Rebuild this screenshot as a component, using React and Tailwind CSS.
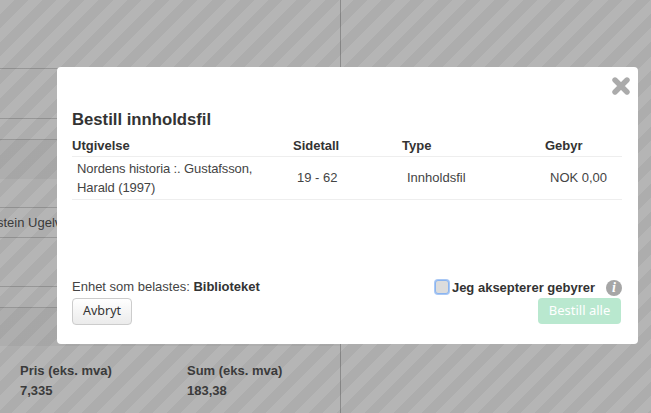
import React from 'react';

const Row = ({ className, children }) => (
  <div className={`border-b border-[#d4d4d4] overflow-hidden whitespace-nowrap ${className}`}>{children}</div>
);

const App = () => {
  return (
    <div className="relative h-[413px] w-[651px] overflow-hidden bg-white font-['Liberation_Sans',Arial,sans-serif] text-[#333]">
      {/* page behind the dialog */}
      <div className="h-full w-[341px] border-r border-[#c4c4c4]">
        <Row className="h-[69px]" />
        <Row className="h-[50px]" />
        <Row className="h-[21px]" />
        <div className="h-[39px] bg-[#f5f5f5]" />
        <Row className="h-[29px]" />
        <Row className="h-[30px] text-[13px] leading-[29px] text-[#555]">
          <span className="-ml-[3px]">stein Ugelvik</span>
        </Row>
        <Row className="h-[49px]" />
        <Row className="h-[21px]" />
        <div className="h-[38px] bg-[#f5f5f5]" />
        <div className="flex pl-5 pt-[15px] text-[13px] font-bold leading-5 text-[#555]">
          <div className="w-[167px]">
            <div>Pris (eks. mva)</div>
            <div>7,335</div>
          </div>
          <div>
            <div>Sum (eks. mva)</div>
            <div>183,38</div>
          </div>
        </div>
      </div>

      {/* striped overlay */}
      <div className="absolute inset-0 bg-[repeating-linear-gradient(135deg,rgba(0,0,0,0.29)_0px,rgba(0,0,0,0.29)_10px,rgba(0,0,0,0.32)_10px,rgba(0,0,0,0.32)_20px)]" />

      {/* dialog */}
      <div className="absolute left-[57px] top-[67px] flex h-[277px] w-[581px] flex-col rounded bg-white px-[15px] pt-[43px]">
        <svg className="absolute right-[8px] top-[10px] h-[18px] w-[18px]" viewBox="0 0 18 18">
          <path d="M3 3L15 15M15 3L3 15" stroke="#ababab" strokeWidth="5.4" strokeLinecap="round" />
        </svg>

        <h2 className="text-[16.7px] font-bold leading-[20px] text-[#333]">Bestill innholdsfil</h2>

        <table className="mt-[6px] w-[550px] table-fixed border-collapse text-[13px]">
          <thead>
            <tr className="border-b border-[#eeeeee] text-left font-bold">
              <th className="w-[221px] leading-[20px]">Utgivelse</th>
              <th className="w-[109px] leading-[20px]">Sidetall</th>
              <th className="w-[143px] leading-[20px]">Type</th>
              <th className="leading-[20px]">Gebyr</th>
            </tr>
          </thead>
          <tbody>
            <tr className="border-b border-[#eeeeee] text-[#444]">
              <td className="px-[5px] py-[2px] leading-[19px] tracking-[-0.1px]">Nordens historia :. Gustafsson, Harald (1997)</td>
              <td className="px-[4px]">19 - 62</td>
              <td className="px-[5px]">Innholdsfil</td>
              <td className="px-[5px]">NOK 0,00</td>
            </tr>
          </tbody>
        </table>

        <div className="mt-auto flex items-start justify-between pb-[19px]">
          <div>
            <div className="text-[13px] leading-[22px] text-[#444]">
              Enhet som belastes: <b className="text-[#333]">Biblioteket</b>
            </div>
            <button className="-mt-px h-[27px] w-[60px] rounded border border-[#ccc] bg-gradient-to-b from-white to-[#ebebeb] font-['Noto_Sans',sans-serif] text-[12.5px] text-[#333]">
              Avbryt
            </button>
          </div>
          <div className="flex flex-col items-end">
            <div className="mr-px flex h-6 items-center">
              <input
                type="checkbox"
                className="mr-[3px] h-[14px] w-[14px] -translate-y-px appearance-none rounded-[3px] border border-[#8ab4f0] bg-[#dcdcdc] shadow-[0_0_0_1px_#a9c8f5]"
              />
              <span className="text-[13px] font-bold leading-[20px]">Jeg aksepterer gebyrer</span>
              <span className="ml-[11px] flex h-4 w-4 items-center justify-center rounded-full bg-[#a6a6a6] font-['Liberation_Serif',serif] text-sm font-bold italic text-white">
                i
              </span>
            </div>
            <button className="mr-[2px] -mt-[2px] h-[26px] w-[83px] rounded bg-[#b9e8cf] font-['Noto_Sans',sans-serif] text-[13px] text-white">
              Bestill alle
            </button>
          </div>
        </div>
      </div>
    </div>
  );
};

export default App;
